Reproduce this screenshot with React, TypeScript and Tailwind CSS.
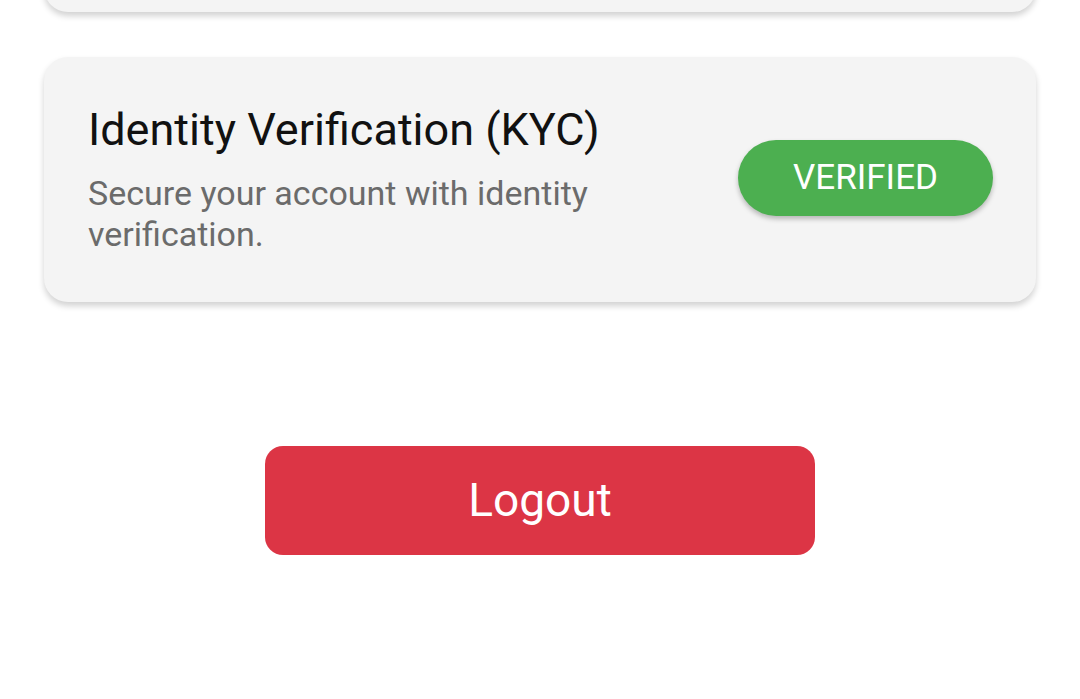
import React from 'react';

export default function App() {
    return (
        <div className="min-h-[699px] w-[1080px] bg-white overflow-hidden font-['Roboto',sans-serif]">
            <div className="px-[44px]">
                {/* previous card, only its bottom edge shows */}
                <div className="-mt-[100px] h-[112px] bg-[#f4f4f4] rounded-[24px] shadow-[0_4px_6px_rgba(0,0,0,0.18)]"></div>

                <div className="mt-[45px] h-[245px] bg-[#f4f4f4] rounded-[24px] shadow-[0_4px_6px_rgba(0,0,0,0.18)] pl-[44px] pr-[43px] flex items-center justify-between">
                    <div className="w-[560px]">
                        <h2 className="text-[45px] leading-[52px] text-[#111]">Identity Verification (KYC)</h2>
                        <p className="mt-[17px] text-[34px] leading-[41px] text-[#6b6b6b]">
                            Secure your account with identity verification.
                        </p>
                    </div>
                    <div className="-mt-[3px] w-[255px] h-[76px] rounded-full bg-[#4caf50] shadow-[0_3px_5px_rgba(0,0,0,0.25)] flex items-center justify-center text-white text-[35px]">
                        VERIFIED
                    </div>
                </div>
            </div>

            <div className="mt-[144px] flex justify-center">
                <button className="w-[550px] h-[109px] rounded-[18px] bg-[#dc3545] text-white text-[46px]">
                    Logout
                </button>
            </div>
        </div>
    );
}
